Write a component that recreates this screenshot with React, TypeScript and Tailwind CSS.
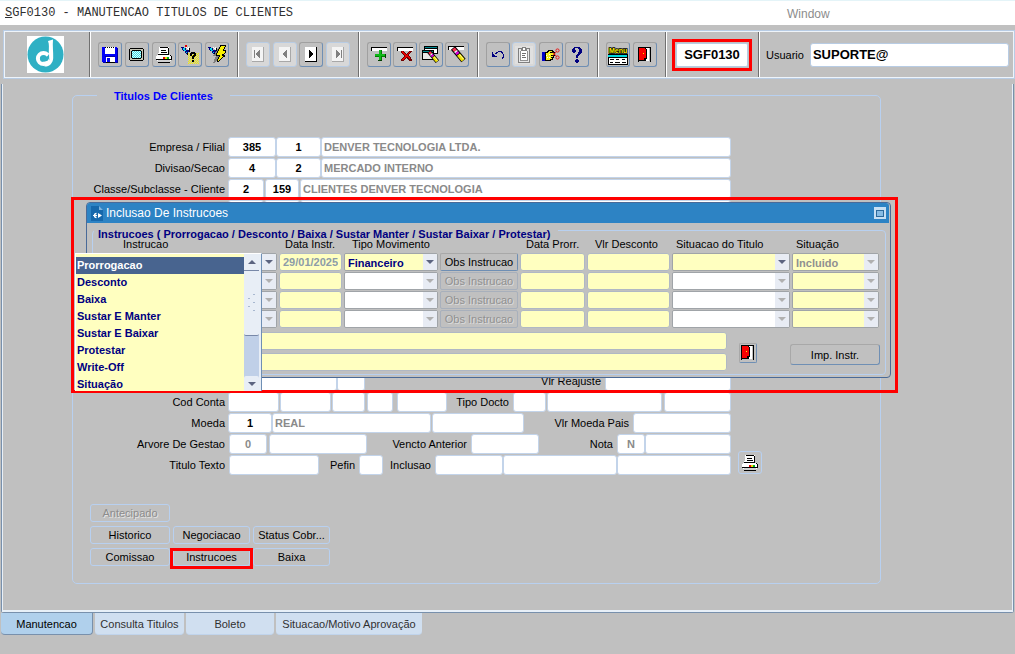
import React from "react";

type Kids = { children?: React.ReactNode };

/* ---------- icons ---------- */

function Icon({ w = 18, h = 18, children }: Kids & { w?: number; h?: number }) {
  return (
    <svg width={w} height={h} viewBox={`0 0 ${w} ${h}`} shapeRendering="crispEdges" aria-hidden="true" className="block shrink-0">
      {children}
    </svg>
  );
}

const Logo = () => (
  <svg width="37" height="37" viewBox="0 0 37 37" role="img" aria-label="Denver" className="block bg-white">
    <circle cx="18.5" cy="18.5" r="18" fill="#2fb0c4" />
    <circle cx="16.5" cy="22.5" r="5.6" fill="none" stroke="#fff" strokeWidth="4" />
    <path d="M21 5 L26 3.5 C25.4 10 26.4 16 26.2 22 C26 27 22.5 30.8 17.5 30.6 L17.5 27 C21 26 21.8 22 21.8 17 C21.8 12 22.4 8 21 5 Z" fill="#fff" />
    <path d="M14.5 21 C18 22.5 20.5 21 22 18 L22.3 24 C19.5 26.5 15.5 25.5 14.5 21 Z" fill="#2fb0c4" />
    <path d="M16 25.5 C18.5 26.5 21 25 22 22.5 L22 26 C20 28.5 17 28 16 25.5 Z" fill="#fff" />
  </svg>
);

const SaveIcon = () => (
  <Icon w={16} h={16}>
    <path d="M0 0H15V1H16V16H1V15H0Z" fill="#0000f8" />
    <path d="M3 0H13V7H3Z" fill="#fff" />
    <path d="M3 0H4V1H3ZM5 0H6V1H5ZM7 0H8V1H7ZM9 0H10V1H9ZM11 0H12V1H11Z" fill="#000" />
    <path d="M3 9H13V10H3ZM15 1H16V16H1V15H15Z" fill="#0000a0" />
    <path d="M4 10H13V15H4Z" fill="#fff" />
    <path d="M5 11H8V15H5Z" fill="#0000f8" />
    <path d="M4 15H13V16H4Z" fill="#000" />
  </Icon>
);

const ScreenIcon = () => (
  <Icon w={15} h={13}>
    <path d="M1 0H14V1H15V12H14V13H1V12H0V1H1Z" fill="#000" />
    <path d="M1 1H14V12H1Z" fill="#c8c8b8" />
    <path d="M3 2H12V3H13V10H12V11H3V10H2V3H3Z" fill="#000" />
    <path d="M3 3H12V10H3Z" fill="#d8ffff" />
    <path d="M3 3.5H12M3 5.5H12M3 7.5H12M3 9.5H12" stroke="#40d8e0" strokeDasharray="1 1" />
    <path d="M4 4.5H12M4 6.5H12M4 8.5H12" stroke="#40d8e0" strokeDasharray="1 1" />
  </Icon>
);

const PrinterIcon = () => (
  <Icon w={16} h={16}>
    <path d="M3 0H13V8H2V6H3Z" fill="#fff" />
    <path d="M4 0H12V1H4ZM12 1H13V8H12ZM5 3H10V4H5ZM5 5H11V6H5ZM2 7H13V8H2Z" fill="#000" />
    <path d="M1 8H15V14H1ZM0 9H16V13H0Z" fill="#fff" />
    <path d="M14 8H15V9H14ZM15 9H16V13H15ZM0 12H15V13H0ZM2 15H14V16H2Z" fill="#000" />
    <path d="M2 13H14V15H2Z" fill="#d0d0d0" />
    <path d="M7 10H9V12H7Z" fill="#e00000" />
    <path d="M9 10H11V12H9Z" fill="#e8e000" />
    <path d="M11 10H13V12H11Z" fill="#00b020" />
  </Icon>
);

const Torch = () => (
  <>
    <path d="M0 2H3V3H5V5H8V7H7V9H5V8H4V6H2V5H1V3H0Z" fill="#000080" />
    <path d="M2 3H4V5H5V7H6V8H5V6H3V5H2Z" fill="#00d8e8" />
    <path d="M4 2H5V3H6V4H7V5H8V6H9V3H8V2H7V3H6V2Z" fill="#fff" />
    <path d="M8 3H9V7H8ZM6 8H7V10H6Z" fill="#000" />
  </>
);

const QueryIcon = () => (
  <Icon w={19} h={19}>
    <path d="M7 8.5H18M7 10.5H18M7 12.5H18M7 14.5H18M7 16.5H18M7 18.5H18" stroke="#f8f000" strokeDasharray="1 1" />
    <path d="M8 9.5H18M8 11.5H18M8 13.5H18M8 15.5H18M8 17.5H18" stroke="#f8f000" strokeDasharray="1 1" />
    <path d="M4 0H6V2H4Z" fill="#e00000" />
    <Torch />
    <path d="M10 7H14V8H15V11H14V12H13V14H11V11H12V10H13V9H11V11H9V8H10ZM11 15H13V17H11Z" fill="#000" />
  </Icon>
);

const ExecuteIcon = () => (
  <Icon w={19} h={19}>
    <Torch />
    <path d="M11 2L5 11H8L5 18H7L13 10H10Z" fill="#808080" />
    <path d="M12 0H18V2H17V4H16V5H18V8H17V9H16V10H17V12H15V13H14V14H13V15H12V16H11V17H9V14H10V12H11V11H8V8H9V6H10V4H11V2H12Z" fill="#000" />
    <path d="M13 1H17V2H16V4H15V6H17V8H16V9H14V11H15V12H14V13H13V14H12V15H11V16H10V14H11V12H12V10H9V8H10V6H11V4H12V2H13Z" fill="#f8f000" />
  </Icon>
);

function NavIcon({ kind, on = false }: { kind: "first" | "prev" | "next" | "last"; on?: boolean }) {
  const c = on ? "#000" : "#808080";
  return (
    <Icon w={12} h={15}>
      <path d="M0 0H12V15H0Z" fill={on ? "#000" : "#a8a8a8"} />
      <path d="M0 0H11V14H0Z" fill={on ? "#fff" : "#f4f4f4"} />
      {(kind === "first" || kind === "prev") && <path d="M8 3V11H7V10H6V9H5V8H4V6H5V5H6V4H7V3Z" fill={c} />}
      {(kind === "next" || kind === "last") && <path d="M4 3V11H5V10H6V9H7V8H8V6H7V5H6V4H5V3Z" fill={c} />}
      {kind === "first" && <path d="M2 3H3V11H2Z" fill={c} />}
      {kind === "last" && <path d="M9 3H10V11H9Z" fill={c} />}
    </Icon>
  );
}

const Bar = () => (
  <>
    <path d="M0 0H16V4H0Z" fill="#000" />
    <path d="M1 1H16V4H1Z" fill="#fff" />
  </>
);

const AddIcon = () => (
  <Icon w={16} h={16}>
    <Bar />
    <path d="M8 3H11V7H15V10H11V14H8V10H4V7H8Z" fill="#008000" />
    <path d="M8 3H10V7H14V9H10V13H8V9H4V7H8Z" fill="#10b818" />
    <path d="M7 13H11V14H7ZM14 7H15V11H14Z" fill="#004000" />
  </Icon>
);

const RemoveIcon = () => (
  <Icon w={16} h={16}>
    <Bar />
    <path d="M4 4H7V5H8V6H9V7H10V6H11V5H12V4H15V5H14V6H13V7H12V9H13V10H14V12H15V14H12V13H11V12H10V11H9V12H8V13H7V14H4V12H5V11H6V10H7V8H6V7H5V6H4Z" fill="#700000" />
    <path d="M5 4H6V5H7V6H8V7H9V8H10V7H11V6H12V5H13V6H12V7H11V9H12V10H13V12H12V11H11V10H9V11H8V12H7V13H5V12H6V11H7V10H8V8H7V7H6V6H5Z" fill="#e80000" />
  </Icon>
);

const Pen = () => (
  <g fill="none" shapeRendering="auto">
    <path d="M5 2L15.5 14.5" stroke="#000" strokeWidth="5.5" />
    <path d="M5.5 2.5L7.5 5" stroke="#ff3050" strokeWidth="3.5" />
    <path d="M7.5 5L8.5 6.2" stroke="#ffffff" strokeWidth="3.5" />
    <path d="M8.5 6.2L10 8" stroke="#e000e0" strokeWidth="3.5" />
    <path d="M10.5 8.6L15.2 14.2" stroke="#f0e000" strokeWidth="3.8" />
    <path d="M11.5 8.4L15.5 13.2" stroke="#ffffa8" strokeWidth="1" />
  </g>
);

const ClearFormIcon = () => (
  <Icon w={18} h={17}>
    <path d="M2 0H16V8H2Z" fill="#000" />
    <path d="M3 1H15V2H3Z" fill="#008890" />
    <path d="M3 3H15V7H3Z" fill="#fff" />
    <path d="M0 4H12V14H0Z" fill="#000" />
    <path d="M1 5H11V6H1Z" fill="#008890" />
    <path d="M1 7H11V13H1Z" fill="#e8e8e8" />
    <g transform="translate(3 4) scale(0.8)">
      <Pen />
    </g>
  </Icon>
);

const ClearRecordIcon = () => (
  <Icon w={18} h={17}>
    <Bar />
    <Pen />
  </Icon>
);

const UndoIcon = () => (
  <Icon w={14} h={12}>
    <path d="M1 3V8H6V7H4V6H3V5H2V3ZM5 5H6V4H7V3H10V4H11V5H12V8H11V10H12V9H13V5H12V3H11V2H7V3H5V4H4V5Z" fill="#000080" />
  </Icon>
);

const ClipboardIcon = () => (
  <Icon w={18} h={18}>
    <path d="M0 0H18V18H0Z" fill="#e0e0e0" />
    <path d="M3 2H15V17H3Z" fill="#808080" />
    <path d="M4 3H14V16H4Z" fill="#e8e8e8" />
    <path d="M5 5H13V15H5Z" fill="#909090" />
    <path d="M6 5H12V14H6Z" fill="#fff" />
    <path d="M7 1H11V3H12V5H6V3H7Z" fill="#808080" />
    <path d="M8 2H10V4H8Z" fill="#fff" />
    <path d="M7 7H11V8H7ZM7 9H10V10H7ZM7 11H11V12H7Z" fill="#707070" />
  </Icon>
);

const HandIcon = () => (
  <Icon w={18} h={14}>
    <path d="M0 4H3V13H0Z" fill="#0000c8" />
    <path d="M3 4H5V3H6V2H11V3H12V4H13V8H12V10H11V12H9V13H3Z" fill="#000" />
    <path d="M4 5H6V4H7V3H10V4H8V5H12V7H9V8H11V9H9V10H10V11H8V12H4Z" fill="#f8f020" />
    <path d="M4 7H5V8H4ZM5 9H6V10H5ZM7 6H8V7H7ZM7 9H8V10H7Z" fill="#fff" />
    <g fill="none" stroke="#e81818" shapeRendering="auto">
      <circle cx="15.5" cy="2.5" r="1.6" />
      <circle cx="15.5" cy="9.5" r="1.6" />
      <path d="M11 7.5L14.5 3.5M11 4.5L14.5 8.5" />
    </g>
  </Icon>
);

const HelpIcon = () => (
  <Icon w={12} h={18}>
    <path d="M3 1H9V2H10V3H11V7H10V8H9V9H8V10H7V12H5V9H6V8H7V6H8V3H7V2H4V4H5V6H4V7H2V6H1V3H2V2H3ZM5 13H7V14H8V16H7V17H5V16H4V14H5Z" fill="#000080" />
  </Icon>
);

const MenuIcon = () => (
  <Icon w={20} h={20}>
    <path d="M0 9H20V20H0Z" fill="#000" />
    <text x="1" y="8" fontFamily="Liberation Sans, sans-serif" fontWeight="bold" fontSize="7" fill="#f8f000" stroke="#000" strokeWidth="1.6" paintOrder="stroke" shapeRendering="auto">
      Menu
    </text>
    <path d="M0 10H19V12H0Z" fill="#00d8e0" />
    <path d="M1 13H19V19H1Z" fill="#fff" />
    <path d="M2 14H6V15H2ZM8 14H11V15H8ZM14 14H17V15H14ZM2 17H5V18H2ZM7 17H12V18H7ZM14 17H18V18H14Z" fill="#000" />
  </Icon>
);

const DoorIcon = () => (
  <Icon w={14} h={16}>
    <path d="M0 0H13V15H0Z" fill="#000" />
    <path d="M8 1H11V14H8Z" fill="#fff" />
    <path d="M11 1H12V15H11ZM1 14H12V15H1Z" fill="#c0c0c0" />
    <path d="M0 1H8V2H9V12H7V14H0Z" fill="#000" />
    <path d="M1 1H7V2H8V11H6V13H1Z" fill="#f80000" />
    <path d="M5 6H6V7H5Z" fill="#f8f000" />
  </Icon>
);

const WindowIcon = () => (
  <svg width="13" height="15" viewBox="0 0 13 15" aria-hidden="true" className="block">
    <path d="M0 0H8L12 4V15H0Z" fill="#1668ac" />
    <path d="M8 0L12 4H8Z" fill="#7cb4e0" />
    <path d="M5.5 7.5A2 2 0 1 0 5.5 11.5" fill="none" stroke="#fff" strokeWidth="1.4" />
    <path d="M2 9.5H6" stroke="#fff" />
    <path d="M7 7L11 9.5L7 12Z" fill="#fff" />
  </svg>
);

/* ---------- controls ---------- */

function ToolButton({ label, off = false, children }: Kids & { label: string; off?: boolean }) {
  return (
    <button
      type="button"
      aria-label={label}
      disabled={off}
      className={
        off
          ? "flex h-[25px] w-6 items-center justify-center rounded-[3px] border border-[#b8cce4] bg-[#d8d8d8]"
          : "flex h-[25px] w-6 items-center justify-center rounded-[3px] border border-t-[#a0a0a0] border-r-[#6f8fb4] border-b-[#6f8fb4] border-l-[#a0a0a0]"
      }
    >
      {children}
    </button>
  );
}

const Rule = () => <div className="w-0.5 shrink-0 self-stretch border-l border-[#707070] bg-white" />;

function ToolGroup({ w, children }: Kids & { w: string }) {
  return <div className={`${w} flex shrink-0 items-center justify-between pr-2 pl-[7px]`}>{children}</div>;
}

function Field({ w, label, value = "", tone = "text-black" }: { w: string; label: string; value?: string; tone?: string }) {
  return (
    <input
      aria-label={label}
      defaultValue={value}
      className={`${w} ${tone} h-5 min-w-0 rounded-[3px] border border-[#c3d4ea] bg-white px-0.5 text-[11px] font-bold outline-none`}
    />
  );
}

const grow = "flex-1";
const grey = "text-[#8a8a8a]";
const greyMid = "text-center text-[#8a8a8a]";
const mid = "text-center text-black";

function Row({ label, children }: Kids & { label: string }) {
  return (
    <div className="mr-[149px] flex h-5 items-center">
      <span className="mr-[3px] w-[152px] shrink-0 text-right">{label}</span>
      {children}
    </div>
  );
}

function Caption({ w, children }: Kids & { w: string }) {
  return <span className={`${w} shrink-0 pr-1 text-right whitespace-nowrap`}>{children}</span>;
}

function FormButton({ off = false, children }: Kids & { off?: boolean }) {
  return (
    <button
      type="button"
      disabled={off}
      className="block h-[18px] w-full rounded-[3px] border border-[#b8d0f0] text-center leading-4 disabled:text-[#8c8c8c] disabled:[text-shadow:1px_1px_0_#e4e4e4]"
    >
      {children}
    </button>
  );
}

function Combo({ label, value = "", yellow = false, on = false, tone = "text-[#000080]" }: { label: string; value?: string; yellow?: boolean; on?: boolean; tone?: string }) {
  return (
    <div className="relative h-[18px] overflow-hidden rounded-[2px] border border-[#a0a4a8]">
      <select
        aria-label={label}
        defaultValue={value}
        disabled={!on}
        className={`${tone} ${yellow ? "bg-[#ffffc0]" : "bg-white"} block h-4 w-full appearance-none pt-px pl-[3px] text-[11px] leading-4 font-bold opacity-100 outline-none`}
      >
        <option>{value}</option>
      </select>
      <span className="pointer-events-none absolute inset-y-0 right-0 flex w-[14px] items-center justify-center bg-[#e8ecf4]">
        <svg width="8" height="4" viewBox="0 0 8 4" aria-hidden="true">
          <path d="M0 0H8L4 4Z" fill={on ? "#5c6480" : "#b0b0b0"} />
        </svg>
      </span>
    </div>
  );
}

function Cell({ label, value = "" }: { label: string; value?: string }) {
  return (
    <input
      aria-label={label}
      defaultValue={value}
      className="block h-[18px] w-full rounded-[3px] border border-[#b0b8c4] bg-[#ffffc0] px-[3px] text-[11px] font-bold text-[#8c9ca8] outline-none"
    />
  );
}

/* ---------- sections ---------- */

function Toolbar() {
  return (
    <div className="mt-[5px] ml-[3px] h-[49px] border border-[#b8cce4]">
      <div className="flex h-full items-center border border-[#eef4fa]">
        <div className="flex w-[84px] shrink-0 justify-center pr-1">
          <Logo />
        </div>
        <Rule />
        <ToolGroup w="w-[146px]">
          <ToolButton label="Salvar"><SaveIcon /></ToolButton>
          <ToolButton label="Tela"><ScreenIcon /></ToolButton>
          <ToolButton label="Imprimir"><PrinterIcon /></ToolButton>
          <ToolButton label="Consultar"><QueryIcon /></ToolButton>
          <ToolButton label="Executar consulta"><ExecuteIcon /></ToolButton>
        </ToolGroup>
        <Rule />
        <ToolGroup w="w-[119px]">
          <ToolButton label="Primeiro" off><NavIcon kind="first" /></ToolButton>
          <ToolButton label="Anterior" off><NavIcon kind="prev" /></ToolButton>
          <ToolButton label="Proximo"><NavIcon kind="next" on /></ToolButton>
          <ToolButton label="Ultimo" off><NavIcon kind="last" /></ToolButton>
        </ToolGroup>
        <Rule />
        <ToolGroup w="w-[117px]">
          <ToolButton label="Inserir registro"><AddIcon /></ToolButton>
          <ToolButton label="Excluir registro"><RemoveIcon /></ToolButton>
          <ToolButton label="Limpar tela"><ClearFormIcon /></ToolButton>
          <ToolButton label="Limpar registro"><ClearRecordIcon /></ToolButton>
        </ToolGroup>
        <Rule />
        <ToolGroup w="w-[118px]">
          <ToolButton label="Desfazer"><UndoIcon /></ToolButton>
          <ToolButton label="Colar" off><ClipboardIcon /></ToolButton>
          <ToolButton label="Recortar"><HandIcon /></ToolButton>
          <ToolButton label="Ajuda"><HelpIcon /></ToolButton>
        </ToolGroup>
        <Rule />
        <ToolGroup w="w-[66px]">
          <ToolButton label="Menu"><MenuIcon /></ToolButton>
          <ToolButton label="Sair"><DoorIcon /></ToolButton>
        </ToolGroup>
        <Rule />
        <div className="w-[91px] shrink-0 pr-1.5 pl-[5px]">
          <div className="border-3 border-[#ff0000] p-px">
            <input
              aria-label="Programa"
              defaultValue="SGF0130"
              className="block h-6 w-full rounded-[2px] border border-[#b8cce4] bg-white text-center text-[13px] font-bold outline-none"
            />
          </div>
        </div>
        <Rule />
        <label className="flex flex-1 items-center gap-[6px] pr-1 pl-[6px]">
          Usuario
          <input
            defaultValue="SUPORTE@"
            className="h-6 min-w-0 flex-1 rounded-[3px] border border-[#b8cce4] bg-white px-0.5 text-[13px] font-bold outline-none"
          />
        </label>
      </div>
    </div>
  );
}

function TitleForm() {
  return (
    <fieldset className="mr-[131px] ml-[69px] min-w-0 rounded-[5px] border border-[#b8d0f0]">
      <legend className="ml-6 h-[14px] px-[17px] pt-0.5 text-[11px] leading-3 font-bold text-[#0000ff]">Titulos De Clientes</legend>

      <div className="flex flex-col gap-px pt-[35px]">
        <Row label="Empresa / Filial">
          <Field w="w-12" label="Empresa" value="385" tone={mid} />
          <Field w="w-[45px]" label="Filial" value="1" tone={mid} />
          <Field w={grow} label="Nome da empresa" value="DENVER TECNOLOGIA LTDA." tone={grey} />
        </Row>
        <Row label="Divisao/Secao">
          <Field w="w-12" label="Divisao" value="4" tone={mid} />
          <Field w="w-[45px]" label="Secao" value="2" tone={mid} />
          <Field w={grow} label="Nome da divisao" value="MERCADO INTERNO" tone={grey} />
        </Row>
        <Row label="Classe/Subclasse - Cliente">
          <Field w="w-9" label="Classe" value="2" tone={mid} />
          <Field w="ml-px w-[34px]" label="Subclasse" value="159" tone={mid} />
          <Field w="ml-px flex-1" label="Cliente" value="CLIENTES DENVER TECNOLOGIA" tone={grey} />
        </Row>
        <Row label="">
          <Field w="w-9" label="Campo 1" />
          <Field w="w-9" label="Campo 2" />
          <Field w={grow} label="Campo 3" />
        </Row>
      </div>

      <div className="mt-[151px] flex flex-col gap-px">
        <Row label="">
          <Field w="w-[109px]" label="Conta" />
          <Field w="w-7" label="Digito" />
          <Caption w="w-[240px]">Vlr Reajuste</Caption>
          <Field w={grow} label="Vlr Reajuste" />
        </Row>
        <Row label="Cod Conta">
          <Field w="w-[51px]" label="Cod Conta 1" />
          <Field w="ml-px w-[51px]" label="Cod Conta 2" />
          <Field w="ml-px w-[33px]" label="Cod Conta 3" />
          <Field w="ml-0.5 w-[26px]" label="Cod Conta 4" />
          <Field w="ml-1 w-[50px]" label="Cod Conta 5" />
          <Caption w="w-[66px]">Tipo Docto</Caption>
          <Field w="w-[33px]" label="Tipo Docto" />
          <Field w="ml-px w-[115px]" label="Descricao do tipo" />
          <Field w="ml-0.5 flex-1" label="Complemento do tipo" />
        </Row>
        <Row label="Moeda">
          <Field w="w-11" label="Moeda" value="1" tone={mid} />
          <Field w="w-[159px]" label="Nome da moeda" value="REAL" tone={grey} />
          <Field w="ml-px w-[92px]" label="Valor" />
          <Caption w="w-[109px]">Vlr Moeda Pais</Caption>
          <Field w={grow} label="Vlr Moeda Pais" />
        </Row>
        <Row label="Arvore De Gestao">
          <Field w="ml-px w-[38px]" label="Arvore De Gestao" value="0" tone={greyMid} />
          <Field w="ml-0.5 w-[98px]" label="Descricao da arvore" />
          <Caption w="w-[104px]">Vencto Anterior</Caption>
          <Field w="w-[68px]" label="Vencto Anterior" />
          <Caption w="w-[78px]">Nota</Caption>
          <Field w="w-7" label="Nota" value="N" tone={greyMid} />
          <Field w={grow} label="Numero da nota" />
        </Row>
        <div className="relative">
          <Row label="Titulo Texto">
            <Field w="ml-px w-[90px]" label="Titulo Texto" />
            <Caption w="w-10">Pefin</Caption>
            <Field w="w-6" label="Pefin" />
            <Caption w="w-[52px]">Inclusao</Caption>
            <Field w="w-[68px]" label="Inclusao" />
            <Field w="w-[114px]" label="Usuario da inclusao" />
            <Field w={grow} label="Hora da inclusao" />
          </Row>
          <button
            type="button"
            aria-label="Imprimir titulo"
            className="absolute -top-1 right-[118px] flex h-[23px] w-6 items-center justify-center rounded-[3px] border border-[#b8d0f0]"
          >
            <PrinterIcon />
          </button>
        </div>
      </div>

      <div className="mt-[29px] mb-[17px] ml-[17px] grid grid-cols-[80px_77px_77px] gap-x-[3px] gap-y-1">
        <div className="col-span-3 w-20">
          <FormButton off>Antecipado</FormButton>
        </div>
        <FormButton>Historico</FormButton>
        <FormButton>Negociacao</FormButton>
        <FormButton>Status Cobr...</FormButton>
        <FormButton>Comissao</FormButton>
        <div className="relative">
          <FormButton>Instrucoes</FormButton>
          <div className="pointer-events-none absolute -inset-x-[3px] top-0 -bottom-[3px] border-3 border-[#ff0000]" />
        </div>
        <FormButton>Baixa</FormButton>
      </div>
    </fieldset>
  );
}

const instructions = ["Prorrogacao", "Desconto", "Baixa", "Sustar E Manter", "Sustar E Baixar", "Protestar", "Write-Off", "Situação"];

function InstructionList() {
  return (
    <div className="absolute top-[53px] left-px flex h-[138px] w-[187px] border border-t-white border-r-[#6f8fb4] border-b-0 border-l-white bg-[#ffffc0]">
      <ul role="listbox" aria-label="Instrucao" className="flex-1 overflow-hidden pt-[3px] text-[11px] leading-[17px] font-bold text-[#000080]">
        {instructions.map((name, i) => (
          <li key={name} role="option" aria-selected={i === 0} className={i === 0 ? "h-[17px] bg-[#48648f] pl-px text-white" : "h-[17px] pl-px"}>
            {name}
          </li>
        ))}
      </ul>
      <div className="flex w-[15px] flex-col bg-[#c0d0e8]">
        <button type="button" aria-label="Rolar para cima" className="flex h-4 items-center justify-center bg-[#e8eef6]">
          <svg width="8" height="4" viewBox="0 0 8 4" aria-hidden="true"><path d="M0 4H8L4 0Z" fill="#5c6480" /></svg>
        </button>
        <div className="flex h-[66px] items-center justify-center rounded-b-[2px] border-y border-[#7888a8] bg-[#e8eef6]">
          <svg width="9" height="20" viewBox="0 0 9 20" aria-hidden="true">
            <path d="M6 1H8V2H6ZM1 5H3V6H1ZM6 9H8V10H6ZM1 13H3V14H1ZM6 17H8V18H6Z" fill="#a8b8d0" />
          </svg>
        </div>
        <button type="button" aria-label="Rolar para baixo" className="mt-auto flex h-[15px] items-center justify-center rounded-t-[2px] bg-[#e8eef6]">
          <svg width="8" height="4" viewBox="0 0 8 4" aria-hidden="true"><path d="M0 0H8L4 4Z" fill="#5c6480" /></svg>
        </button>
      </div>
      <div className="w-0.5 bg-[#e8eef6]" />
    </div>
  );
}

function InstructionDialog() {
  return (
    <div role="dialog" aria-label="Inclusao De Instrucoes" className="rounded-[4px] border border-[#4a6a98] bg-[#c0c0c0]">
      <div className="mr-px flex h-5 items-center rounded-t-[3px] bg-[#2d83c4] pr-[3px] pl-1 text-white">
        <WindowIcon />
        <h2 className="ml-0.5 flex-1 text-[12px] leading-4">Inclusao De Instrucoes</h2>
        <button type="button" aria-label="Maximizar" className="flex size-3 items-center justify-center bg-[#c8e0f4]">
          <span className="block h-[7px] w-2 border border-[#2d6a9c] bg-[#88bce4]" />
        </button>
      </div>

      <fieldset className="mr-1 mb-0.5 ml-[5px] min-w-0 rounded-[4px] border border-[#b8d0f0]">
        <legend className="ml-px h-[15px] pt-[5px] pr-2 pl-1 text-[11px] leading-3 font-bold whitespace-nowrap text-[#000080]">
          Instrucoes ( Prorrogacao / Desconto / Baixa / Sustar Manter / Sustar Baixar / Protestar)
        </legend>
        <div className="pr-1">
          <table className="-mt-px w-full table-fixed border-separate border-spacing-x-0.5 border-spacing-y-px">
            <colgroup>
              <col className="w-[182px]" />
              <col className="w-[63px]" />
              <col className="w-[94px]" />
              <col className="w-[78px]" />
              <col className="w-[65px]" />
              <col className="w-[83px]" />
              <col className="w-[118px]" />
              <col className="w-[87px]" />
            </colgroup>
            <thead>
              <tr className="h-[14px] text-left leading-3 whitespace-nowrap [&>th]:p-0 [&>th]:align-top [&>th]:font-normal">
                <th><span className="pl-7">Instrucao</span></th>
                <th><span className="pl-1.5">Data Instr.</span></th>
                <th><span className="pl-2">Tipo Movimento</span></th>
                <th aria-label="Observacao" />
                <th><span className="pl-1.5">Data Prorr.</span></th>
                <th><span className="pl-2">Vlr Desconto</span></th>
                <th><span className="pl-1">Situacao do Titulo</span></th>
                <th><span className="pl-1">Situação</span></th>
              </tr>
            </thead>
            <tbody className="[&_td]:p-0">
              {[0, 1, 2, 3].map((i) => (
                <tr key={i}>
                  <td><Combo label="Instrucao" on={i === 0} yellow={i === 0} /></td>
                  <td><Cell label="Data Instr." value={i === 0 ? "29/01/2025" : ""} /></td>
                  <td><Combo label="Tipo Movimento" value={i === 0 ? "Financeiro" : ""} on={i === 0} yellow={i === 0} /></td>
                  <td>
                    <button
                      type="button"
                      disabled={i !== 0}
                      className="block h-[18px] w-full rounded-[2px] border border-t-[#a8a8a8] border-r-[#6f8fb4] border-b-[#6f8fb4] border-l-[#a8a8a8] leading-4 whitespace-nowrap disabled:border-[#a8b0bc] disabled:text-[#909090] disabled:[text-shadow:1px_1px_0_#dcdcdc]"
                    >
                      Obs Instrucao
                    </button>
                  </td>
                  <td><Cell label="Data Prorr." /></td>
                  <td><Cell label="Vlr Desconto" /></td>
                  <td><Combo label="Situacao do Titulo" on={i === 0} yellow={i === 0} /></td>
                  <td><Combo label="Situação" value={i === 0 ? "Incluido" : ""} yellow tone="text-[#909090]" /></td>
                </tr>
              ))}
            </tbody>
          </table>
        </div>

        <div className="mt-[3px] mb-[3px] flex items-center pr-[5px] pl-[3px]">
          <div className="flex flex-1 flex-col gap-[3px]">
            <Cell label="Observacao 1" />
            <Cell label="Observacao 2" />
          </div>
          <button
            type="button"
            aria-label="Fechar"
            className="mt-0.5 ml-3 flex h-5 w-[18px] items-center justify-center rounded-[2px] border border-t-[#a8a8a8] border-r-[#6f8fb4] border-b-[#6f8fb4] border-l-[#a8a8a8]"
          >
            <DoorIcon />
          </button>
          <button
            type="button"
            className="mt-1.5 ml-[33px] h-[21px] w-[90px] rounded-[3px] border border-t-[#a8a8a8] border-r-[#6f8fb4] border-b-[#6f8fb4] border-l-[#a8a8a8] leading-4"
          >
            Imp. Instr.
          </button>
        </div>
      </fieldset>
    </div>
  );
}

export default function App() {
  return (
    <div className="relative min-h-screen bg-[#c0c0c0] font-['Liberation_Sans',Arial,sans-serif] text-[11px] leading-4 text-black">
      <header className="flex h-[25px] items-center border-t border-[#e4f4f8] bg-white pl-[5px]">
        <h1 className="w-[782px] font-['Liberation_Mono','Courier_New',monospace] text-[12px] text-[#303030]">
          <span className="underline">S</span>GF0130 - MANUTENCAO TITULOS DE CLIENTES
        </h1>
        <span className="pt-px text-[12px] text-[#8c8c8c]">Window</span>
      </header>

      <Toolbar />

      <main className="mx-px mt-[5px] rounded-b-[3px] border-x border-b border-[#7890ac]">
        <div className="border-x border-b-2 border-[#e8f0f8] pt-1 pb-[26px]">
          <TitleForm />
        </div>
      </main>

      <nav className="flex gap-0.5 pl-px">
        <a href="#manutencao" className="flex h-[22px] w-[92px] items-center justify-center rounded-b-[4px] border-r border-b border-[#7890ac] bg-[#b0d0ec]">Manutencao</a>
        <a href="#consulta" className="flex h-[22px] w-[89px] items-center justify-center rounded-b-[4px] border-b border-[#c0d4ec] bg-[#d0dff0] text-[#303030]">Consulta Titulos</a>
        <a href="#boleto" className="flex h-[22px] w-[88px] items-center justify-center rounded-b-[4px] border-b border-[#c0d4ec] bg-[#d0dff0] text-[#303030]">Boleto</a>
        <a href="#situacao" className="flex h-[22px] w-[146px] items-center justify-center rounded-b-[4px] border-b border-[#c0d4ec] bg-[#d0dff0] text-[#303030]">Situacao/Motivo Aprovação</a>
      </nav>

      <div className="absolute top-[197px] left-[71px] w-[827px] border-3 border-[#ff0000] pt-0.5 pr-1 pb-3 pl-3">
        <InstructionDialog />
        <InstructionList />
      </div>
    </div>
  );
}
